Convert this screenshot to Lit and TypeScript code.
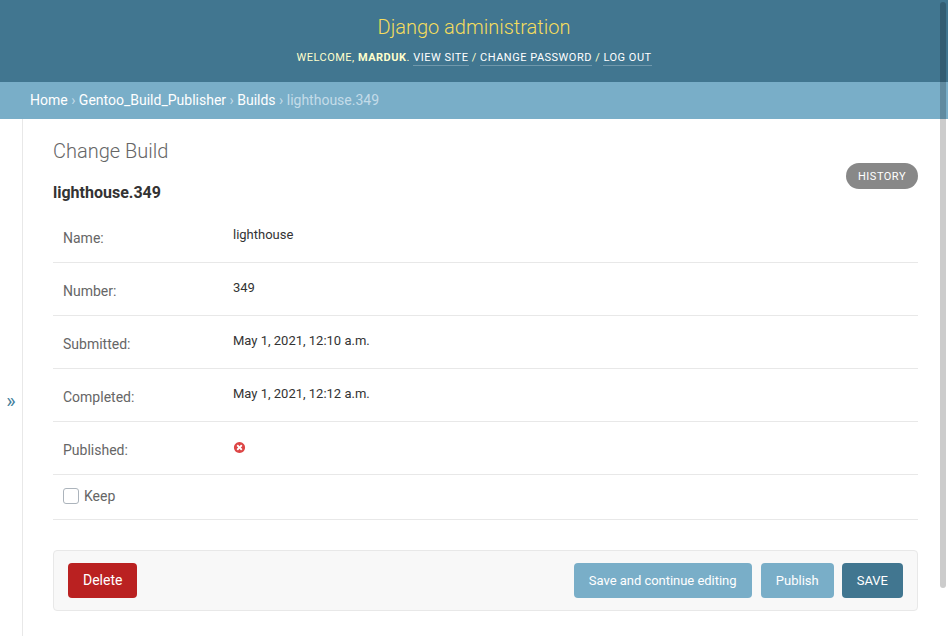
import { LitElement, html, css, svg } from "lit";
import { customElement } from "lit/decorators.js";

const crossIcon = html`<svg class="no" width="13" height="13" viewBox="0 0 1792 1792">
  ${svg`<path fill="#dd4646" d="M1277 1122q0-26-19-45l-181-181 181-181q19-19 19-45 0-27-19-46l-90-90q-19-19-46-19-26 0-45 19l-181 181-181-181q-19-19-45-19-27 0-46 19l-90 90q-19 19-19 46 0 26 19 45l181 181-181 181q-19 19-19 45 0 27 19 46l90 90q19 19 46 19 26 0 45-19l181-181 181 181q19 19 45 19 27 0 46-19l90-90q19-19 19-46zm387-226q0 209-103 385.5t-279.5 279.5-385.5 103-385.5-103-279.5-279.5-103-385.5 103-385.5 279.5-279.5 385.5-103 385.5 103 279.5 279.5 103 385.5z"/>`}
</svg>`;

const fields = [
  { label: "Name:", value: "lighthouse" },
  { label: "Number:", value: "349" },
  { label: "Submitted:", value: "May 1, 2021, 12:10 a.m." },
  { label: "Completed:", value: "May 1, 2021, 12:12 a.m." },
  { label: "Published:", value: crossIcon },
];

@customElement("app-root")
export class AppRoot extends LitElement {
  static styles = css`
    :host {
      display: flex;
      flex-direction: column;
      position: relative;
      height: 636px;
      overflow: hidden;
      background: #fff;
      color: #333;
      font: 13px/20px Roboto, sans-serif;
    }
    * { box-sizing: border-box; }
    a { color: inherit; text-decoration: none; }
    .header {
      height: 82px;
      flex: none;
      padding-top: 10px;
      background: #417690;
      color: #ffc;
      text-align: center;
    }
    .brand {
      margin: 0;
      font-size: 20px;
      line-height: 34px;
      font-weight: 300;
      color: #f5dd5d;
    }
    .tools {
      margin-top: 7px;
      font-size: 11px;
      line-height: 14px;
      letter-spacing: 0.5px;
      text-transform: uppercase;
    }
    .tools a { color: #fff; border-bottom: 1px solid rgba(255, 255, 255, 0.25); padding-bottom: 1px; }
    .crumbs {
      height: 37px;
      flex: none;
      padding: 10px 30px;
      background: #79aec8;
      color: #c4dce8;
      font-size: 14px;
      line-height: 16px;
    }
    .crumbs a { color: #fff; }
    .main { flex: 1; display: flex; min-height: 0; }
    .toggle {
      width: 23px;
      flex: none;
      border-right: 1px solid #e8e8e8;
      color: #447e9b;
      font-size: 20px;
      line-height: 23px;
      text-align: center;
      padding-top: 271px;
    }
    .content { flex: 1; padding: 20px 30px 0; }
    .title {
      margin: 0;
      font-size: 20px;
      line-height: 24px;
      font-weight: 300;
      color: #666;
    }
    .head { display: flex; justify-content: space-between; height: 47px; }
    .object { margin: 20px 0 0; font-size: 16px; line-height: 19px; font-weight: 700; }
    .history {
      height: 26px;
      padding: 1px 12px 0;
      border-radius: 15px;
      background: #888;
      color: #fff;
      font-size: 11px;
      line-height: 26px;
      letter-spacing: 0.5px;
    }
    .row {
      display: grid;
      grid-template-columns: 170px 1fr;
      height: 53px;
      padding: 10px;
      border-bottom: 1px solid #e8e8e8;
      color: #666;
      font-size: 14px;
    }
    .label { line-height: 16px; padding-top: 10px; }
    .value { color: #333; font-size: 13px; line-height: 20px; padding-top: 5px; }
    .no { display: block; margin-top: 4px; }
    .keep {
      display: flex;
      align-items: center;
      gap: 5px;
      height: 45px;
      padding: 0 10px 2px;
      border-bottom: 1px solid #e8e8e8;
      color: #666;
      font-size: 14px;
    }
    .box { width: 16px; height: 16px; border: 1px solid #acb4bc; border-radius: 3px; background: #fff; }
    .submit {
      display: flex;
      align-items: center;
      height: 61px;
      margin-top: 30px;
      padding: 0 14px;
      border: 1px solid #e8e8e8;
      border-radius: 4px;
      background: #f8f8f8;
    }
    .btn {
      height: 35px;
      padding: 0 15px;
      border-radius: 4px;
      color: #fff;
      background: #79aec8;
      line-height: 35px;
      white-space: nowrap;
    }
    .delete { margin-right: auto; background: #ba2121; font-size: 14px; }
    .continue { width: 178px; letter-spacing: -0.03px; }
    .publish { margin: 0 8px 0 9px; }
    .save { background: #417690; }
    .scroll {
      position: absolute;
      top: 2px;
      right: 2px;
      width: 6px;
      height: 586px;
      border-radius: 3px;
      background: rgba(0, 0, 0, 0.2);
    }
  `;

  render() {
    return html`
      <div class="header">
        <h1 class="brand">Django administration</h1>
        <div class="tools">Welcome, <strong>marduk</strong>. <a>View site</a> / <a>Change password</a> / <a>Log out</a></div>
      </div>
      <div class="crumbs"><a>Home</a> › <a>Gentoo_Build_Publisher</a> › <a>Builds</a> › lighthouse.349</div>
      <div class="main">
        <div class="toggle">»</div>
        <div class="content">
          <h2 class="title">Change Build</h2>
          <div class="head">
            <h3 class="object">lighthouse.349</h3>
            <a class="history">HISTORY</a>
          </div>
          ${fields.map((f) => html`<div class="row"><div class="label">${f.label}</div><div class="value">${f.value}</div></div>`)}
          <div class="keep"><span class="box"></span>Keep</div>
          <div class="submit">
            <a class="btn delete">Delete</a>
            <a class="btn continue">Save and continue editing</a>
            <a class="btn publish">Publish</a>
            <a class="btn save">SAVE</a>
          </div>
        </div>
      </div>
      <div class="scroll"></div>
    `;
  }
}
